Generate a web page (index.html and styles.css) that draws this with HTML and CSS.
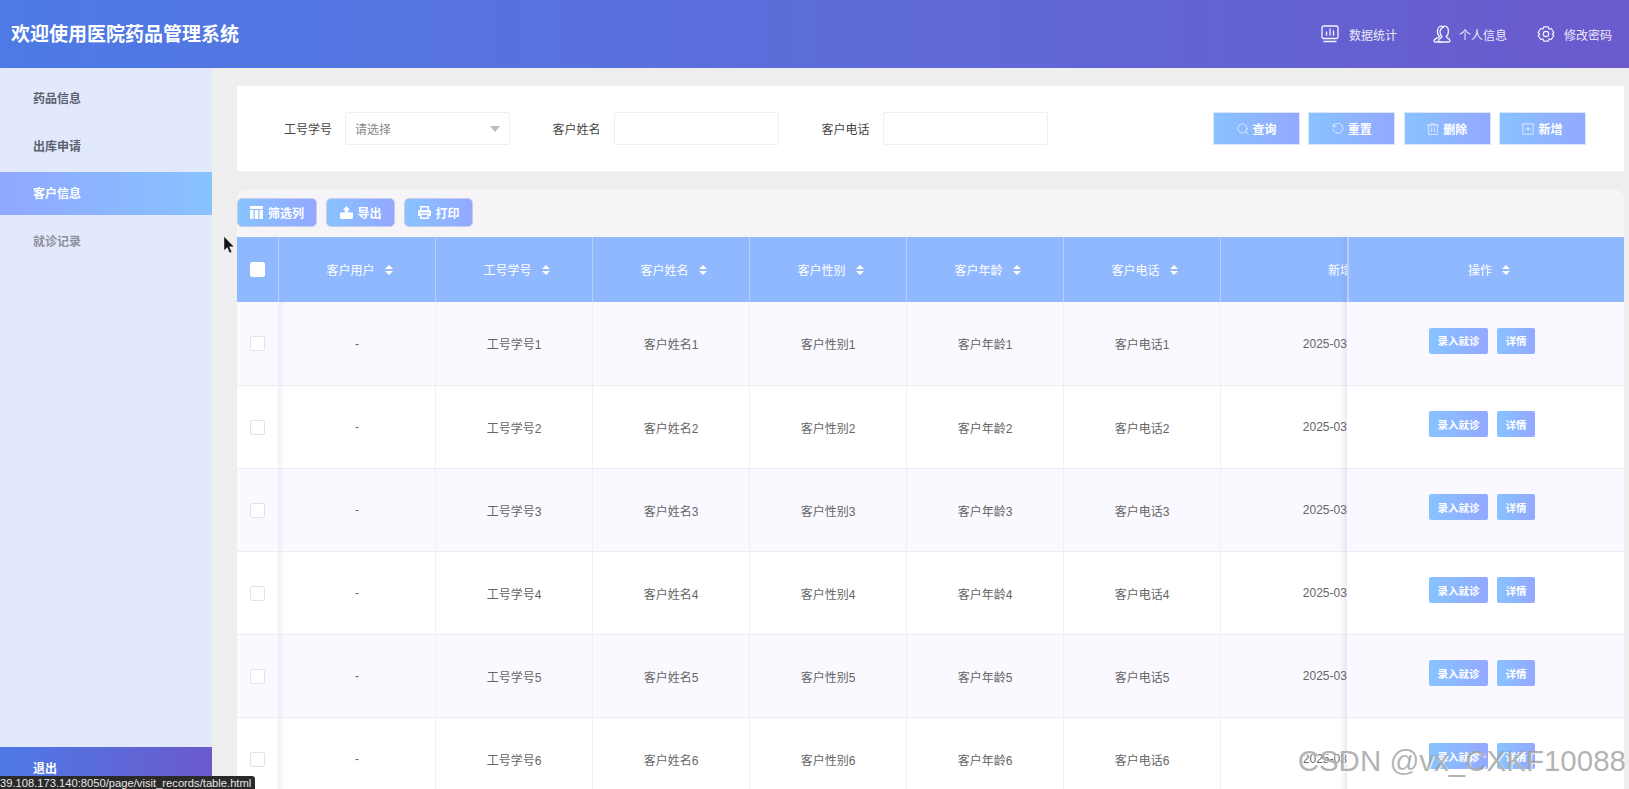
FILE: index.html
```html
<!DOCTYPE html>
<html lang="zh-CN">
<head>
<meta charset="utf-8">
<title>医院药品管理系统</title>
<link rel="stylesheet" href="styles.css">
</head>
<body>
<div class="app">
  <header class="topbar">
    <h1 class="brand">欢迎使用医院药品管理系统</h1>
    <nav class="topnav">
      <a class="topnav-item">
        <svg class="topnav-icon" viewBox="0 0 18 18"><rect x="1" y="1" width="16" height="12.5" rx="1.5"/><path d="M5.5 10V7M9 10V4M12.5 10V6M3 16.5h12"/></svg>
        <span>数据统计</span>
      </a>
      <a class="topnav-item">
        <svg class="topnav-icon" viewBox="0 0 18 18"><path d="M6.6 11.6C5 10.6 4.4 8.9 4.4 6.8 4.4 3.6 6 1.2 8.2 1.2c1 0 1.8.4 2.4 1.1M6.4 11.4c0 1.2-5.4 2-5.4 4.3 0 .9.8 1.3 1.8 1.3h5"/><path d="M9.6 2.4c.6-.8 1.3-1.2 2.2-1.2 2.2 0 3.6 2.4 3.6 5.4 0 2.2-.6 3.9-2.2 5 0 1.3 3.8 1.9 3.8 4.1 0 .9-.8 1.3-1.8 1.3H7.2c-1 0-1.8-.4-1.8-1.3 0-2.2 3.6-2.8 3.6-4.1C7.5 10.5 7 8.8 7 6.8c0-1.800.9-3.400 2.600-4.400z"/></svg>
        <span>个人信息</span>
      </a>
      <a class="topnav-item">
        <svg class="topnav-icon" viewBox="0 0 24 24"><path class="thick" d="M9 2.500h6l1 3 3-.8 3.500 5.300-2.200 2 2.200 2-3.500 5.300-3-.8-1 3H9l-1-3-3 .8L1.500 14l2.200-2-2.200-2L5 4.700l3 .8z"/><circle class="thick" cx="12" cy="12" r="3.600"/></svg>
        <span>修改密码</span>
      </a>
    </nav>
  </header>

  <div class="body-row">
    <aside class="sidebar">
      <ul class="menu">
        <li class="menu-item">药品信息</li>
        <li class="menu-item">出库申请</li>
        <li class="menu-item is-active">客户信息</li>
        <li class="menu-item is-muted">就诊记录</li>
      </ul>
      <div class="logout">退出</div>
    </aside>

    <main class="main">
      <section class="search-card">
        <div class="field">
          <label class="field-label">工号学号</label>
          <div class="select"><span>请选择</span><i class="select-caret"></i></div>
        </div>
        <div class="field">
          <label class="field-label">客户姓名</label>
          <input class="input" type="text">
        </div>
        <div class="field">
          <label class="field-label">客户电话</label>
          <input class="input" type="text">
        </div>
        <div class="actions">
          <button class="grad-btn action-btn"><svg class="line-icon" viewBox="0 0 14 14"><circle cx="6.300" cy="6.300" r="5.300"/><path d="M10.300 10.300L13 13"/></svg>查询</button>
          <button class="grad-btn action-btn"><svg class="line-icon" viewBox="0 0 14 14"><path d="M2.200 2.800A5.800 5.800 0 1 1 1.200 7M1.500 1v3h3"/></svg>重置</button>
          <button class="grad-btn action-btn"><svg class="line-icon" viewBox="0 0 14 14"><path d="M.500 2.500h13M4.500 2.500V1h5v1.500M2 2.500V13.500h10V2.500M5.500 5.500v5M8.500 5.500v5"/></svg>删除</button>
          <button class="grad-btn action-btn"><svg class="line-icon" viewBox="0 0 14 14"><rect x="1" y="1" width="12" height="12"/><path d="M4.500 7h5M7 4.500v5"/></svg>新增</button>
        </div>
      </section>

      <section class="panel">
        <div class="toolbar">
          <button class="grad-btn tool-btn"><svg class="solid-icon" viewBox="0 0 13 13"><path d="M0 0h13v3H0zM0 4h3.500v9H0zM4.750 4h3.500v9h-3.500zM9.500 4H13v9H9.500z"/></svg>筛选列</button>
          <button class="grad-btn tool-btn"><svg class="solid-icon" viewBox="0 0 13 13"><path d="M6.500 0l3.500 4H8.200v2.500H12c.6 0 1 .4 1 1V11.500c0 .8-.6 1.500-1.500 1.500h-10C.6 13 0 12.300 0 11.500V7.500c0-.6.4-1 1-1h3.800V4H3z"/></svg>导出</button>
          <button class="grad-btn tool-btn"><svg class="solid-icon" viewBox="0 0 13 13"><path fill-rule="evenodd" d="M3 0h7c.6 0 1 .4 1 1v3h.5c.8 0 1.500.7 1.500 1.500V10h-2v2c0 .6-.4 1-1 1H3c-.6 0-1-.4-1-1v-2H0V5.500C0 4.700.7 4 1.500 4H2V1c0-.6.4-1 1-1zm.5 1.500V4h6V1.500zM1.500 6.500v1h10v-1zm2 2.500v2.500h6V9z"/></svg>打印</button>
        </div>

        <div class="grid">
          <div class="grid-scroll">
            <table class="data-table">
              <colgroup><col class="col-check"><col class="col-std"><col class="col-std"><col class="col-std"><col class="col-std"><col class="col-std"><col class="col-std"><col class="col-date"></colgroup>
              <thead>
                <tr>
                  <th><span class="check check-head"></span></th>
                  <th class="after-check"><span class="th-in">客户用户<i class="sort"></i></span></th>
                  <th><span class="th-in">工号学号<i class="sort"></i></span></th>
                  <th><span class="th-in">客户姓名<i class="sort"></i></span></th>
                  <th><span class="th-in">客户性别<i class="sort"></i></span></th>
                  <th><span class="th-in">客户年龄<i class="sort"></i></span></th>
                  <th><span class="th-in">客户电话<i class="sort"></i></span></th>
                  <th><span class="th-in">新增时间<i class="sort"></i></span></th>
                </tr>
              </thead>
              <tbody>
                <tr><td><span class="check"></span></td><td class="after-check">-</td><td>工号学号1</td><td>客户姓名1</td><td>客户性别1</td><td>客户年龄1</td><td>客户电话1</td><td>2025-03-12 10:00:00</td></tr>
                <tr><td><span class="check"></span></td><td class="after-check">-</td><td>工号学号2</td><td>客户姓名2</td><td>客户性别2</td><td>客户年龄2</td><td>客户电话2</td><td>2025-03-12 10:00:00</td></tr>
                <tr><td><span class="check"></span></td><td class="after-check">-</td><td>工号学号3</td><td>客户姓名3</td><td>客户性别3</td><td>客户年龄3</td><td>客户电话3</td><td>2025-03-12 10:00:00</td></tr>
                <tr><td><span class="check"></span></td><td class="after-check">-</td><td>工号学号4</td><td>客户姓名4</td><td>客户性别4</td><td>客户年龄4</td><td>客户电话4</td><td>2025-03-12 10:00:00</td></tr>
                <tr><td><span class="check"></span></td><td class="after-check">-</td><td>工号学号5</td><td>客户姓名5</td><td>客户性别5</td><td>客户年龄5</td><td>客户电话5</td><td>2025-03-12 10:00:00</td></tr>
                <tr><td><span class="check"></span></td><td class="after-check">-</td><td>工号学号6</td><td>客户姓名6</td><td>客户性别6</td><td>客户年龄6</td><td>客户电话6</td><td>2025-03-12 10:00:00</td></tr>
              </tbody>
            </table>
          </div>
          <table class="data-table op-table">
            <thead><tr><th><span class="th-in">操作<i class="sort"></i></span></th></tr></thead>
            <tbody>
              <tr><td><div class="op-btns"><button class="grad-btn op-btn">录入就诊</button><button class="grad-btn op-btn">详情</button></div></td></tr>
              <tr><td><div class="op-btns"><button class="grad-btn op-btn">录入就诊</button><button class="grad-btn op-btn">详情</button></div></td></tr>
              <tr><td><div class="op-btns"><button class="grad-btn op-btn">录入就诊</button><button class="grad-btn op-btn">详情</button></div></td></tr>
              <tr><td><div class="op-btns"><button class="grad-btn op-btn">录入就诊</button><button class="grad-btn op-btn">详情</button></div></td></tr>
              <tr><td><div class="op-btns"><button class="grad-btn op-btn">录入就诊</button><button class="grad-btn op-btn">详情</button></div></td></tr>
              <tr><td><div class="op-btns"><button class="grad-btn op-btn">录入就诊</button><button class="grad-btn op-btn">详情</button></div></td></tr>
            </tbody>
          </table>
        </div>
      </section>
    </main>
  </div>

  <svg class="cursor" viewBox="0 0 11 17"><path d="M0 0v14l3.300-3 2.300 5.500 2.200-1-2.300-5.200H10z"/></svg>
  <div class="status-url">39.108.173.140:8050/page/visit_records/table.html</div>
  <div class="watermark">CSDN @vx_CXKF10088</div>
</div>
</body>
</html>
```

FILE: styles.css
```css
* { box-sizing: border-box; }
html, body { margin: 0; height: 100%; overflow: hidden; }
body {
  font-family: "Liberation Sans", "Noto Sans CJK SC", sans-serif;
  font-size: 12px;
  color: #666;
  background: #eee;
}
.app { position: relative; height: 100vh; display: flex; flex-direction: column; overflow: hidden; }

/* top bar */
.topbar {
  flex: 0 0 68px;
  display: flex;
  align-items: center;
  justify-content: space-between;
  padding: 0 17px 0 11px;
  background: linear-gradient(90deg, #4d7ae6 0%, #5a70dc 40%, #6a5acd 100%);
  color: #fff;
}
.brand { margin: 0; font-size: 19px; line-height: 1; font-weight: 700; }
.topnav { display: flex; gap: 30px; }
.topnav-item { display: flex; align-items: center; color: #eceaf8; }
.topnav-item:first-child { margin-right: 6px; }
.topnav-icon {
  width: 18px; height: 18px; margin-right: 8px;
  fill: none; stroke: #f6f4fd; stroke-width: 1.3; stroke-linecap: round; stroke-linejoin: round;
}
.topnav-item:first-child .topnav-icon { margin-right: 10px; }
.topnav-item:last-child .topnav-icon { margin-right: 9px; }
.thick { stroke-width: 1.600; }

/* sidebar */
.body-row { flex: 1; display: flex; min-height: 0; }
.sidebar {
  flex: 0 0 212px;
  display: flex;
  flex-direction: column;
  justify-content: space-between;
  background: #e3e9fd;
}
.menu { list-style: none; margin: 0; padding: 9px 0 0; display: flex; flex-direction: column; gap: 4.500px; }
.menu-item {
  height: 43px;
  line-height: 45px;
  padding-left: 33px;
  font-weight: 700;
  color: #5a6270;
}
.menu-item.is-active { color: #fff; background: linear-gradient(90deg, #90a8ff, #88c3ff); }
.menu-item.is-muted { color: #8d919c; }
.logout {
  height: 42px;
  padding: 13px 0 0 33px;
  line-height: 18px;
  font-weight: 700;
  color: #fff;
  background: linear-gradient(90deg, #4d7ae6, #6a5acd);
}

/* main */
.main { flex: 1; min-width: 0; padding: 18px 5px 0 25px; display: flex; flex-direction: column; gap: 19px; }
.search-card {
  flex: 0 0 85px;
  display: flex;
  align-items: center;
  padding: 0 38px 0 47px;
  background: #fff;
}
.field { display: flex; align-items: center; gap: 13.500px; margin-right: 42.500px; color: #444; }
.field:first-child { gap: 13px; }
.select, .input {
  width: 165px;
  height: 33px;
  border: 1px solid #efefef;
  border-radius: 2px;
  background: #fff;
  outline: none;
}
.select { display: flex; align-items: center; justify-content: space-between; padding: 0 9px; color: #888; }
.select-caret { width: 0; height: 0; border: 5px solid transparent; border-top: 6px solid #bdbdbd; border-bottom: 0; }
.actions { margin-left: auto; display: flex; gap: 8.330px; }

.grad-btn {
  font: inherit;
  font-weight: 700;
  color: #fff;
  border: 1px solid #c9d6f7;
  background: linear-gradient(90deg, #88c3ff, #93a8ff);
  padding: 0;
  display: flex;
  align-items: center;
  justify-content: center;
}
.action-btn { width: 87px; height: 33px; gap: 4px; border-color: #dbe6fb; }
.line-icon { width: 12px; height: 12px; fill: none; stroke: #e8f0ff; stroke-width: 1; stroke-linecap: round; }

/* panel */
.panel {
  flex: 1;
  min-height: 0;
  background: #f5f4f6;
  border-radius: 8px 8px 0 0;
  padding-top: 8px;
  display: flex;
  flex-direction: column;
  gap: 10px;
}
.toolbar { display: flex; gap: 9px; }
.tool-btn { height: 29px; min-width: 69px; padding: 0 12px; gap: 5px; border-radius: 5px; border-color: #c8cbe9; }
.solid-icon { width: 13px; height: 13px; fill: #fff; }

/* table */
.grid { flex: 1; min-height: 0; display: flex; overflow: hidden; }
.grid-scroll { flex: 0 0 1110px; overflow: hidden; }
.data-table { border-collapse: separate; border-spacing: 0; table-layout: fixed; }
.grid-scroll .data-table { width: 1260px; }
.col-check { width: 42px; }
.col-std { width: 157px; }
.col-date { width: 276px; }
.data-table th {
  height: 65px;
  padding: 0;
  font-weight: 400;
  color: #fff;
  background: #8fb8ff;
  border-right: 1px solid #b9d0f7;
}
.data-table td {
  height: 83px;
  padding: 0;
  text-align: center;
  color: #666;
  border-right: 1px solid #efeff4;
  border-bottom: 1px solid #ecedf2;
  background-color: #fff;
}
.data-table tbody tr:first-child td { height: 84px; }
.data-table tbody tr:nth-child(odd) td { background-color: #faf9ff; }
.data-table tbody td.after-check { background-image: linear-gradient(90deg, rgba(130,130,190,.09), rgba(130,130,190,0) 6px); }
.th-in { display: inline-flex; align-items: center; gap: 10px; padding-left: 5px; }
.sort { display: flex; flex-direction: column; gap: 2px; }
.sort::before, .sort::after { content: ""; width: 0; height: 0; border-left: 4px solid transparent; border-right: 4px solid transparent; }
.sort::before { border-bottom: 4px solid #fff; }
.sort::after { border-top: 4px solid #fff; }
.check {
  display: inline-block;
  width: 15px; height: 15px;
  vertical-align: middle;
  background: #fff;
  border: 1px solid #e3e3e6;
  border-radius: 2px;
}
.check-head { border-color: #fff; }

.op-table { flex: 1; width: 277px; box-shadow: -3px 0 5px rgba(130,130,190,.18); position: relative; }
.op-table th { border-right: 0; border-left: 2px solid #bcd0f5; }
.op-table td { border-right: 0; }
.op-btns { display: flex; justify-content: center; gap: 9px; padding: 0 7px 6px 0; }
.op-btn { height: 26px; padding: 0 8.500px; font-size: 10.500px; border: 0; border-radius: 2px; }

/* overlays */
.cursor { position: absolute; left: 224px; top: 236px; width: 11px; height: 18px; fill: #111; stroke: #fff; stroke-width: .4; }
.status-url {
  position: absolute; left: 0; bottom: 0;
  width: 255px; height: 13px;
  padding: 0;
  background: #2a2a2a;
  color: #e6e6e6;
  font-size: 11.200px;
  line-height: 15px;
  white-space: nowrap;
  overflow: hidden;
  border-radius: 0 3px 0 0;
}
.watermark {
  position: absolute; right: 3px; bottom: 13px;
  font-family: "Liberation Sans", sans-serif;
  font-size: 29.500px;
  line-height: 30px;
  color: rgba(150,150,150,.72);
  text-shadow: 1px 1px 1px rgba(255,255,255,.85);
  white-space: nowrap;
}
```
